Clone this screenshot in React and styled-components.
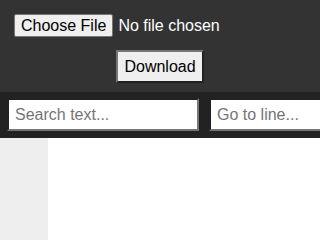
import React from 'react';
import styled, { createGlobalStyle } from 'styled-components';

const GlobalStyle = createGlobalStyle`
  html, body {
    margin: 0;
    padding: 0;
    height: 100%;
    background: #ffffff;
    font-family: "Liberation Sans", Arial, sans-serif;
  }
  #root {
    height: 100%;
  }
`;

const Page = styled.div`
  display: flex;
  flex-direction: column;
  height: 100vh;
  overflow: hidden;
`;

const Header = styled.div`
  background: #333333;
  padding: 14px 14px 9px;
  display: flex;
  flex-direction: column;
  align-items: center;
  gap: 13px;
`;

const FileRow = styled.div`
  align-self: flex-start;
  display: flex;
  align-items: center;
  gap: 5px;
  color: #ffffff;
  font-size: 16px;
`;

const ChooseBtn = styled.span`
  display: inline-block;
  background: #efefef;
  color: #000000;
  border: 1px solid #767676;
  border-radius: 2px;
  padding: 2px 6px;
  font-size: 16px;
  line-height: 17px;
`;

const DownloadBtn = styled.button`
  font-family: "Liberation Sans", Arial, sans-serif;
  font-size: 16px;
  line-height: 19px;
  background: #efefef;
  color: #000000;
  border: 2px outset #767676;
  padding: 5px 6px;
  border-radius: 0;
`;

const SearchBar = styled.div`
  background: #222222;
  display: flex;
  gap: 10px;
  padding: 6px 7px 7px;
  overflow: hidden;
`;

const TextInput = styled.input`
  box-sizing: border-box;
  font-family: "Liberation Sans", Arial, sans-serif;
  font-size: 16px;
  line-height: 19px;
  height: 33px;
  padding: 5px 6px;
  border: 2px inset #767676;
  background: #ffffff;
  color: #000000;
  width: ${p => p.$w}px;
  flex-shrink: 0;
  outline: none;
  &::placeholder {
    color: #757575;
  }
`;

const Body = styled.div`
  flex: 1;
  display: flex;
  background: #ffffff;
`;

const Gutter = styled.div`
  width: 48px;
  background: #eeeeee;
`;

export default function App() {
  return (
    <Page>
      <GlobalStyle />
      <Header>
        <FileRow>
          <ChooseBtn>Choose File</ChooseBtn>
          <span>No file chosen</span>
        </FileRow>
        <DownloadBtn>Download</DownloadBtn>
      </Header>
      <SearchBar>
        <TextInput $w={192} placeholder="Search text..." />
        <TextInput $w={160} placeholder="Go to line..." />
      </SearchBar>
      <Body>
        <Gutter />
      </Body>
    </Page>
  );
}
